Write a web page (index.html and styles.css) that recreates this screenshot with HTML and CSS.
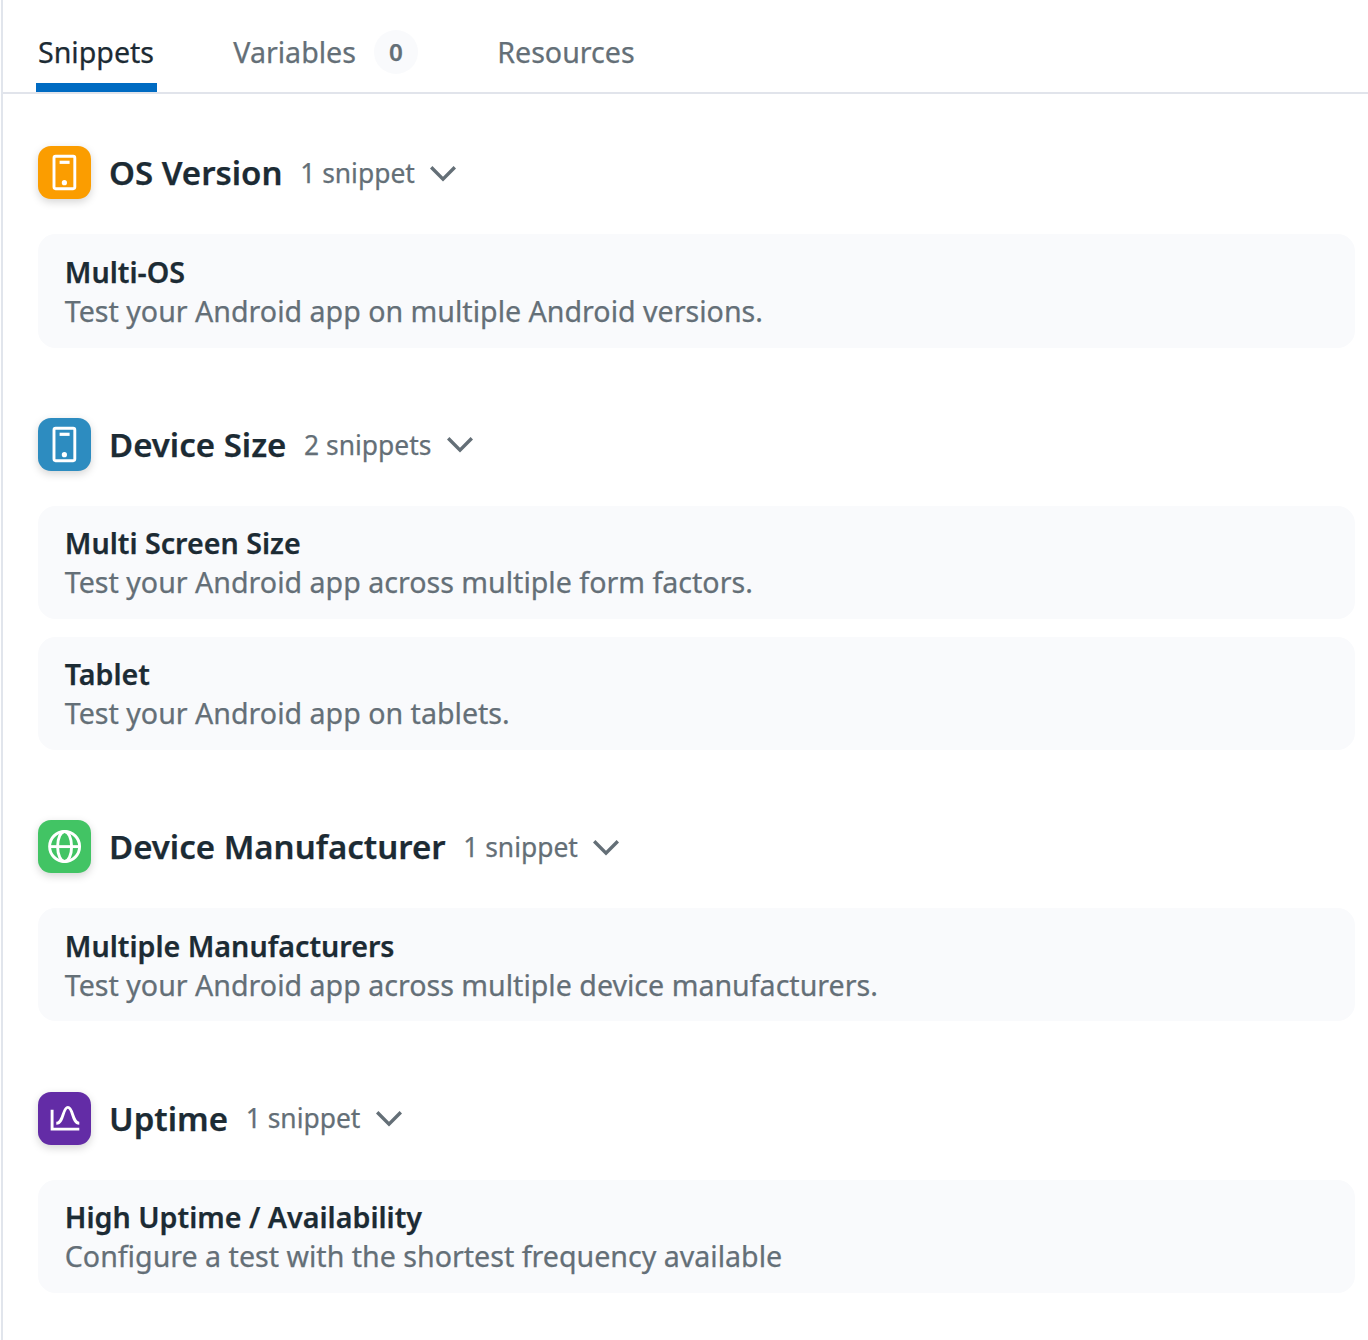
FILE: index.html
```html
<!DOCTYPE html>
<html lang="en">
<head>
<meta charset="utf-8">
<title>Snippets</title>
<link rel="stylesheet" href="styles.css">
</head>
<body>
<div class="panel">
  <nav class="tabs">
    <a class="tab active">Snippets</a>
    <a class="tab variables">Variables<span class="badge">0</span></a>
    <a class="tab">Resources</a>
  </nav>
  <main class="content">
    <section class="group">
      <header class="group-head">
        <span class="icon orange"><svg viewBox="0 0 53 53"><rect x="16" y="10.3" width="20.8" height="32.4" rx="1.6"/><path class="slot" d="M21.6 16.3h10"/><circle class="dot" cx="26.4" cy="36.7" r="2.6"/></svg></span>
        <h2>OS Version</h2><span class="count">1 snippet</span>
        <svg class="chevron" viewBox="0 0 26 16"><path d="M1.2 1.3 13 13.2 24.8 1.3"/></svg>
      </header>
      <article class="card"><h3>Multi-OS</h3><p>Test your Android app on multiple Android versions.</p></article>
    </section>
    <section class="group">
      <header class="group-head">
        <span class="icon blue"><svg viewBox="0 0 53 53"><rect x="16" y="10.3" width="20.8" height="32.4" rx="1.6"/><path class="slot" d="M21.6 16.3h10"/><circle class="dot" cx="26.4" cy="36.7" r="2.6"/></svg></span>
        <h2>Device Size</h2><span class="count">2 snippets</span>
        <svg class="chevron" viewBox="0 0 26 16"><path d="M1.2 1.3 13 13.2 24.8 1.3"/></svg>
      </header>
      <article class="card"><h3>Multi Screen Size</h3><p>Test your Android app across multiple form factors.</p></article>
      <article class="card"><h3>Tablet</h3><p>Test your Android app on tablets.</p></article>
    </section>
    <section class="group">
      <header class="group-head">
        <span class="icon green"><svg viewBox="0 0 53 53"><circle cx="26.6" cy="26.5" r="15"/><ellipse cx="26.6" cy="26.5" rx="7" ry="15"/><path d="M11.4 26.6h30.4"/></svg></span>
        <h2>Device Manufacturer</h2><span class="count">1 snippet</span>
        <svg class="chevron" viewBox="0 0 26 16"><path d="M1.2 1.3 13 13.2 24.8 1.3"/></svg>
      </header>
      <article class="card"><h3>Multiple Manufacturers</h3><p>Test your Android app across multiple device manufacturers.</p></article>
    </section>
    <section class="group">
      <header class="group-head">
        <span class="icon purple"><svg viewBox="0 0 53 53"><path d="M14.1 17.8v19.3h27.2M18.3 31.3C25.8 31.3 24.5 15.4 29.9 15.4S34 31.3 41.3 31.3"/></svg></span>
        <h2>Uptime</h2><span class="count">1 snippet</span>
        <svg class="chevron" viewBox="0 0 26 16"><path d="M1.2 1.3 13 13.2 24.8 1.3"/></svg>
      </header>
      <article class="card"><h3>High Uptime / Availability</h3><p>Configure a test with the shortest frequency available</p></article>
    </section>
  </main>
</div>
</body>
</html>
```
FILE: styles.css
```css
* { box-sizing: border-box; }
body {
  margin: 0;
  background: #fff;
  color: #1c2b34;
  font-family: "Noto Sans", "Open Sans", sans-serif;
  font-size: 28.6px;
  -webkit-text-stroke: .25px currentColor;
}
h2, h3, p { margin: 0; }
.panel {
  height: 1340px;
  margin-left: 1px;
  border-left: 2px solid #e1e5ec;
  overflow: hidden;
}
.tabs {
  display: flex;
  gap: 75.3px;
  height: 94px;
  padding: 12px 0 0 33px;
  border-bottom: 2px solid #e1e4eb;
}
.tab {
  display: flex;
  align-items: center;
  height: 80px;
  padding: 0 2px 1px;
  color: #646f77;
  white-space: nowrap;
}
.tab.active {
  width: 121px;
  margin-right: -1px;
  color: #1c2b34;
  border-bottom: 9px solid #006bc2;
  padding-top: 8px;
}
.badge {
  display: flex;
  align-items: center;
  justify-content: center;
  width: 44px;
  height: 44px;
  margin-left: 18px;
  border-radius: 50%;
  background: #f9fafc;
  font-size: 24.2px;
  font-weight: 600;
}
.content {
  display: flex;
  flex-direction: column;
  gap: 70.2px;
  padding: 52.35px 13px 0 35px;
}
.group { display: flex; flex-direction: column; gap: 17.4px; }
.group-head {
  display: flex;
  align-items: center;
  height: 53px;
  margin-bottom: 17.7px;
}
.icon {
  width: 53px;
  height: 53px;
  margin-right: 18px;
  border-radius: 13px;
  box-shadow: 0 3px 8px rgba(0, 0, 0, .17);
}
.icon svg {
  display: block;
  fill: none;
  stroke: #fff;
  stroke-width: 2.9;
}
.icon .slot { stroke-width: 3.2; }
.icon .dot { fill: #fff; stroke: none; }
.orange { background: #fb9d00; }
.blue { background: #2d8cc0; }
.green { background: #42c464; }
.purple { background: #632ca6; }
h2 { font-size: 33px; font-weight: 600; line-height: 53px; }
.count { margin: .6px 0 0 17.7px; color: #646f77; font-size: 26.4px; }
.chevron {
  width: 26px;
  height: 16px;
  margin: 2px 0 0 15.6px;
  fill: none;
  stroke: #646f77;
  stroke-width: 3.4;
}
.card {
  height: 113.25px;
  padding: 17.5px 26.8px;
  border-radius: 17.6px;
  background: #f9fafc;
  line-height: 39px;
}
h3 { font-size: 28.65px; font-weight: 600; line-height: 39px; }
.card p { color: #646f77; }
```
